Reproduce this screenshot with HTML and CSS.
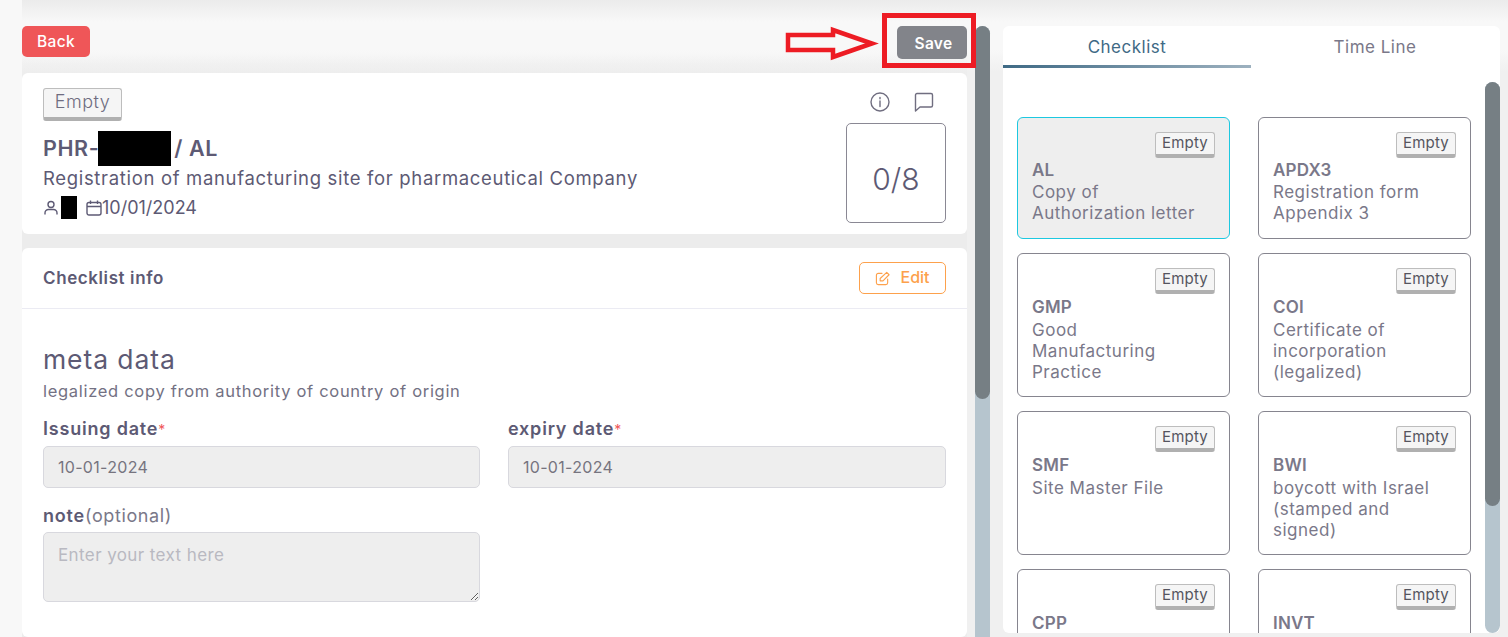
FILE: index.html
```html
<!DOCTYPE html>
<html>
<head>
  <title>Checklist</title>
  <link rel="stylesheet" href="styles.css">
</head>
<body>
  <div class="page">
    <div class="left-col">
      <div class="top-bar">
        <button class="btn-back">Back</button>
        <button class="btn-save">Save</button>
      </div>
      <div class="card summary">
        <div class="summary-text">
          <span class="badge badge-large">Empty</span>
          <h1 class="summary-title">PHR-<span class="redact redact-code"></span>/ AL</h1>
          <p class="summary-desc">Registration of manufacturing site for pharmaceutical Company</p>
          <div class="summary-meta">
            <svg class="meta-icon" viewBox="1 0 14 16"><circle cx="8" cy="4.5" r="3"/><path d="M2 14.5v-1.500a3.500 3.500 0 0 1 3.500-3.500h5a3.500 3.500 0 0 1 3.500 3.500v1.500"/></svg>
            <span class="redact redact-user"></span>
            <svg class="meta-icon cal" viewBox="0 0 16 16"><rect x="1" y="2.500" width="14" height="12.500" rx="2"/><path d="M1 6.500h14M4.500 .5v3.500M11.500 .5v3.500"/></svg>
            <span>10/01/2024</span>
          </div>
        </div>
        <div class="summary-side">
          <div class="summary-icons">
            <svg class="side-icon" viewBox="0 0 20 20"><circle cx="10" cy="10" r="9"/><path d="M10 9v5.500M10 5.500v1.200"/></svg>
            <svg class="side-icon" viewBox="0 0 20 20"><path d="M3 1.500h14a1.500 1.500 0 0 1 1.500 1.500v10.500a1.500 1.500 0 0 1-1.500 1.500h-11l-4.500 4v-16a1.500 1.500 0 0 1 1.500-1.500z"/></svg>
          </div>
          <div class="score">0/8</div>
        </div>
      </div>
      <div class="card info">
        <div class="info-head">
          <span class="info-title">Checklist info</span>
          <button class="btn-edit">
            <svg class="edit-icon" viewBox="0 0 16 16"><path d="M7.500 2.500h-4a2 2 0 0 0-2 2v8a2 2 0 0 0 2 2h8a2 2 0 0 0 2-2v-4"/><path d="M5.500 10.500v-2.500l7-6.500 2.500 2.500-6.500 6.500z"/></svg>
            Edit
          </button>
        </div>
        <div class="info-body">
          <h2 class="info-heading">meta data</h2>
          <p class="info-sub">legalized copy from authority of country of origin</p>
          <div class="field-row">
            <div class="field">
              <label>Issuing date<span class="req">*</span></label>
              <input class="field-input" type="text" value="10-01-2024" disabled>
            </div>
            <div class="field">
              <label>expiry date<span class="req">*</span></label>
              <input class="field-input" type="text" value="10-01-2024" disabled>
            </div>
          </div>
          <div class="field-row">
            <div class="field field-note">
              <label>note<span class="opt">(optional)</span></label>
              <textarea class="field-input field-area" placeholder="Enter your text here"></textarea>
            </div>
          </div>
        </div>
      </div>
    </div>

    <div class="track track-left"><div class="thumb thumb-left"></div></div>

    <div class="right-col">
      <div class="tabs">
        <div class="tab tab-active">Checklist</div>
        <div class="tab">Time Line</div>
      </div>
      <div class="list-wrap">
        <div class="doc-grid">
          <div class="doc doc-short doc-active"><span class="badge">Empty</span><b>AL</b><p>Copy of Authorization letter</p></div>
          <div class="doc doc-short"><span class="badge">Empty</span><b>APDX3</b><p>Registration form Appendix 3</p></div>
          <div class="doc"><span class="badge">Empty</span><b>GMP</b><p>Good Manufacturing Practice</p></div>
          <div class="doc"><span class="badge">Empty</span><b>COI</b><p>Certificate of incorporation (legalized)</p></div>
          <div class="doc"><span class="badge">Empty</span><b>SMF</b><p>Site Master File</p></div>
          <div class="doc"><span class="badge">Empty</span><b>BWI</b><p>boycott with Israel (stamped and signed)</p></div>
          <div class="doc"><span class="badge">Empty</span><b>CPP</b></div>
          <div class="doc"><span class="badge">Empty</span><b>INVT</b></div>
        </div>
        <div class="track track-right"><div class="thumb thumb-right"></div></div>
      </div>
    </div>
  </div>

  <!-- red annotation drawn over the screenshot -->
  <div class="mark-box"></div>
  <svg class="mark-arrow" viewBox="0 0 96 36"><path d="M3 10h45v-5l39 13.500-39 13.500v-7h-45z"/></svg>
</body>
</html>
```

FILE: styles.css
```css
* { box-sizing: border-box; }
html, body { margin: 0; height: 100%; overflow: hidden; }
body { font-family: Inter, "Open Sans", sans-serif; color: #5d5a74; background: linear-gradient(90deg, #f8f8f8 22px, transparent 22px), linear-gradient(#ebebeb, #f8f8f8 22px, #f8f8f8 50px, #f0f0f0 72px); position: relative; }
h1, h2, p { margin: 0; }
button { font-family: inherit; cursor: pointer; }

.page { display: flex; height: 637px; padding: 26px 8px 0 22px; }
.left-col { width: 945px; flex-shrink: 0; display: flex; flex-direction: column; background: linear-gradient(transparent 30px, #ececec 60px); }
.top-bar { display: flex; justify-content: space-between; height: 47px; }
.btn-back { width: 68px; height: 31px; border: none; border-radius: 5px; background: #ef5658; color: #fff; font-size: 15.500px; font-weight: 500; letter-spacing: .4px; }
.btn-save { width: 70px; height: 33px; border: none; border-radius: 5px; background: #82848a; color: #fff; font-size: 15.500px; font-weight: 600; letter-spacing: .3px; padding: 2px 0 0 3px; }

.card { background: #fff; border-radius: 6px; }
.summary { height: 161px; display: flex; justify-content: space-between; padding: 15px 21px 0; margin-bottom: 14px; }
.badge { display: inline-block; border: 1px solid #bdbdbd; border-bottom: 4px solid #b0b0b0; border-radius: 3px; background: #f5f5f5; font-size: 15px; letter-spacing: .2px; line-height: 20px; height: 26px; width: 60px; text-align: center; color: #55555f; }
.badge-large { width: 79px; height: 33px; font-size: 18px; font-weight: 300; letter-spacing: .5px; line-height: 25px; color: #6e6c80; }
.summary-title { font-size: 21.500px; font-weight: 600; line-height: 30px; margin-top: 12px; letter-spacing: .6px; display: flex; align-items: center; height: 30px; }
.redact { display: inline-block; background: #000; }
.redact-code { width: 73px; height: 35px; margin: 0 3px 0 -1px; }
.summary-desc { font-size: 18.500px; line-height: 26px; letter-spacing: .67px; margin-top: 2px; }
.summary-meta { display: flex; align-items: center; font-size: 18px; height: 26px; margin-top: 3px; }
.meta-icon { width: 16px; height: 16px; fill: none; stroke: #5d5a74; stroke-width: 1.400; margin-top: 1px; }
.meta-icon.cal { margin-left: 9px; }
.redact-user { width: 16px; height: 23px; margin-left: 2px; }
.summary-side { width: 100px; display: flex; flex-direction: column; align-items: center; }
.summary-icons { display: flex; gap: 24px; height: 35px; padding-top: 4px; margin-left: 12px; }
.side-icon { width: 20px; height: 20px; fill: none; stroke: #706e80; stroke-width: 1.400; stroke-linecap: round; stroke-linejoin: round; }
.score { width: 100px; height: 100px; border: 1px solid #8a8894; border-radius: 5px; padding-top: 12px; display: flex; align-items: center; justify-content: center; font-size: 30px; font-weight: 300; }

.info { flex: 1; }
.info-head { height: 61px; display: flex; justify-content: space-between; align-items: center; padding: 0 21px; border-bottom: 1px solid #ebebf3; }
.info-title { font-size: 17px; font-weight: 600; letter-spacing: .6px; }
.btn-edit { width: 87px; height: 32px; border: 1px solid #fda14c; border-radius: 5px; background: #fff; color: #fda14c; font-size: 16px; font-weight: 500; display: flex; align-items: center; justify-content: center; gap: 10px; padding: 0 0 2px; }
.edit-icon { width: 15px; height: 15px; margin-top: 3px; fill: none; stroke: #fda14c; stroke-width: 1.200; stroke-linejoin: round; stroke-linecap: round; }
.info-body { padding: 35px 21px 0; }
.info-heading { font-size: 26.500px; font-weight: 400; line-height: 30px; letter-spacing: .9px; }
.info-sub { font-size: 16.500px; line-height: 24px; margin-top: 5px; color: #737183; letter-spacing: .7px; }
.field-row { display: flex; gap: 28px; }
.field { width: 437px; margin-top: 14px; }
.field + .field { width: 438px; }
.field-note { margin-top: 16px; }
.field label { display: block; font-size: 18px; font-weight: 600; letter-spacing: .8px; line-height: 24px; margin-bottom: 4px; }
.req { color: #ef5658; font-weight: 400; font-size: 14px; }
.opt { font-weight: 400; color: #7a7889; letter-spacing: .6px; }
.field-input { display: block; width: 100%; height: 42px; border: 1px solid #d8d8de; border-radius: 5px; background: #eeeeee; padding: 0 14px; font-family: inherit; font-size: 16px; letter-spacing: .3px; color: #76747f; }
.field-area { height: 70px; padding-top: 12px; font-size: 17px; letter-spacing: .4px; resize: vertical; }
.field-area::placeholder { color: #b9b9c1; }

.track { background: #b6c5ce; border-radius: 8px 8px 0 0; flex-shrink: 0; }
.thumb { background: #767f84; border-radius: 8px; }
.track-left { width: 15px; margin-left: 8px; margin-right: 13px; }
.thumb-left { height: 373px; }

.right-col { flex: 1; height: 607px; background: #fff; border-radius: 6px; display: flex; flex-direction: column; overflow: hidden; }
.tabs { display: flex; height: 42px; flex-shrink: 0; }
.tab { width: 248px; text-align: center; font-size: 17px; line-height: 42px; letter-spacing: .5px; color: #7a7889; }
.tab-active { color: #3f6a85; position: relative; }
.tab-active::after { content: ""; position: absolute; left: 0; right: 0; bottom: 0; height: 3px; background: linear-gradient(90deg, #3f6a85, #9db1bf); }
.list-wrap { flex: 1; display: flex; min-height: 0; padding-top: 14px; }
.doc-grid { width: 482px; flex-shrink: 0; padding: 35px 14px 0; display: grid; grid-template-columns: 213px 213px; column-gap: 28px; row-gap: 14px; align-content: start; overflow: hidden; }
.doc { height: 144px; border: 1px solid #86858f; border-radius: 6px; padding: 14px 14px 0; font-size: 17px; letter-spacing: .5px; line-height: 21px; color: #7a7889; display: flex; flex-direction: column; }
.doc .badge { align-self: flex-end; }
.doc b { font-weight: 600; font-size: 17px; letter-spacing: .2px; line-height: 22px; margin-top: 2px; }
.doc p { width: 170px; margin-top: 2px; }
.doc-short { height: 122px; }
.doc-short b, .doc-short p { margin-top: 1px; }
.doc-active { background: #eeeeee; border-color: #1dc8e0; }
.track-right { width: 15px; border-radius: 8px; }
.thumb-right { height: 424px; }

/* annotation */
.mark-box { position: absolute; left: 882px; top: 13px; width: 94px; height: 55px; border: 5px solid #ed1c24; }
.mark-arrow { position: absolute; left: 785px; top: 25px; width: 96px; height: 36px; fill: none; stroke: #ed1c24; stroke-width: 4.500; }
```
